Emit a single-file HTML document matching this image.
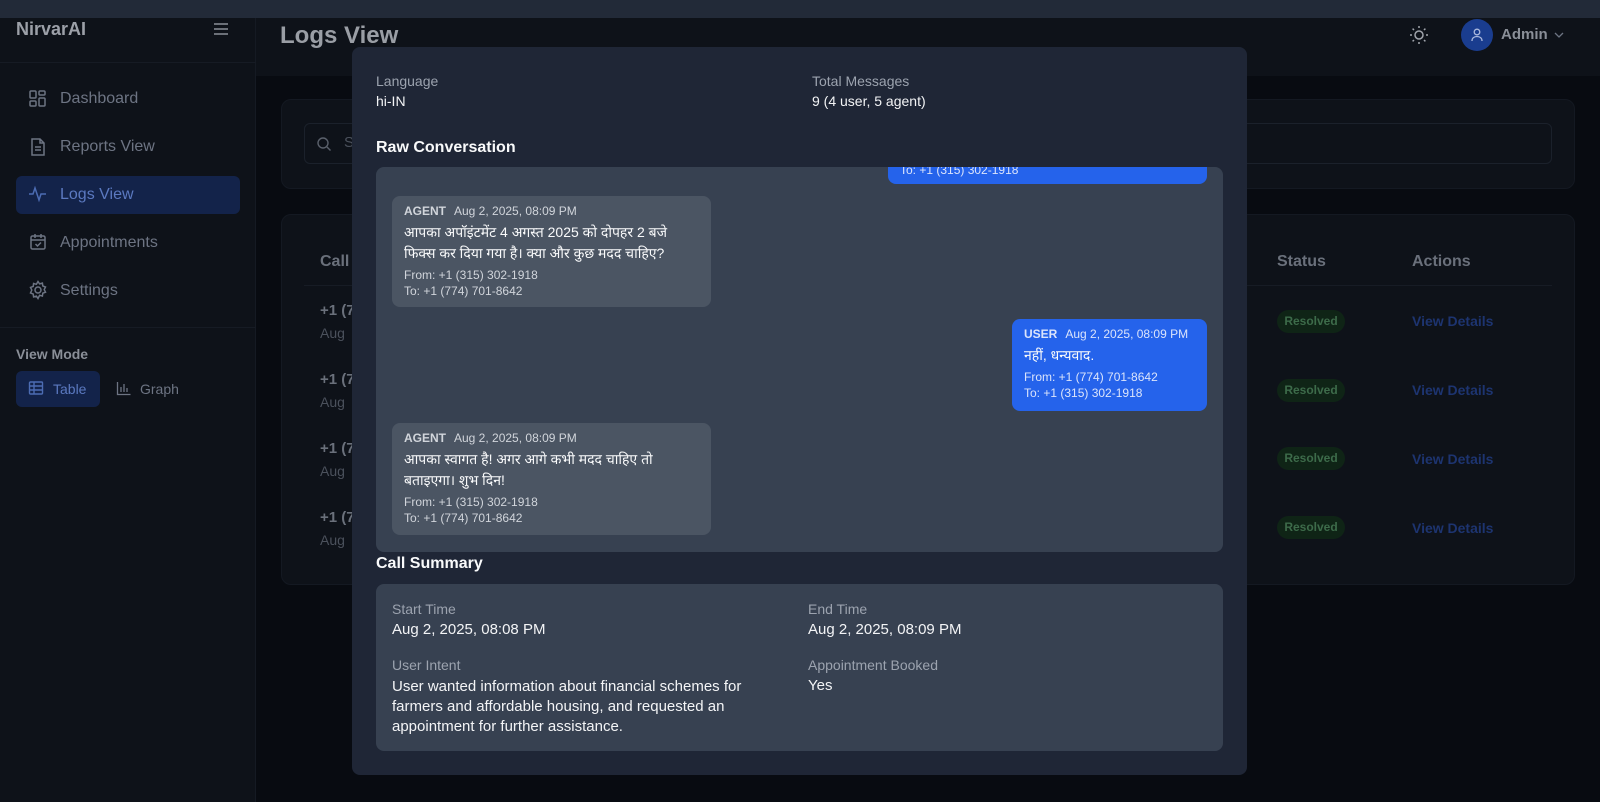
<!DOCTYPE html>
<html><head><meta charset="utf-8">
<style>
*{margin:0;padding:0;box-sizing:border-box}
body{width:1600px;height:802px;overflow:hidden;background:#080b11;font-family:"Liberation Sans","Noto Sans CJK SC","DejaVu Sans",sans-serif;position:relative}
.a{position:absolute}
.top{left:0;top:0;width:1600px;height:18px;background:#222a38}
.side{left:0;top:18px;width:256px;height:784px;background:#0e1219;border-right:1px solid #151a23}
.hdr{left:256px;top:18px;width:1344px;height:58px;background:#0e1219}
.nav{left:60px;font-size:16px;color:#6d7483}
.ic{left:28px;width:20px;height:20px}
.card{background:#0e1219;border:1px solid #141922;border-radius:10px}
.row1{font-size:15px;font-weight:bold;color:#6a707b}
.row2{font-size:14px;color:#4b515c}
.badge{left:1277px;width:68px;height:23px;border-radius:12px;background:#0f2416;color:#3d6b4a;font-size:12px;font-weight:bold;text-align:center;line-height:23px}
.vd{left:1412px;font-size:14px;font-weight:bold;color:#1d3470}
.modal{left:352px;top:47px;width:895px;height:728px;background:#1f2636;border-radius:8px}
.lbl{font-size:14px;color:#9ca3af}
.val{font-size:14px;color:#f3f4f6}
.h{font-size:16px;font-weight:bold;color:#f9fafb}
.box{background:#374151;border-radius:8px}
.bub{border-radius:8px;padding:8px 12px}
.ag{background:#4b5563;width:319px}
.us{background:#2563eb}
.bh{font-size:12px;color:#d1d5db}
.bh b{margin-right:8px}
.bt{font-size:14px;color:#f9fafb;line-height:21px;margin-top:4px}
.bf{font-size:12px;color:#d1d5db;line-height:16px;margin-top:3px}
.us .bh,.us .bf{color:#dbe4fb}
</style></head><body>
<div class="a top"></div>
<div class="a side">
  <div class="a" style="left:16px;top:1px;font-size:18px;font-weight:bold;color:#9ca0a8">NirvarAI</div>
  <svg class="a" style="left:212px;top:2px" width="18" height="18" viewBox="0 0 18 18" stroke="#8a8f98" stroke-width="1.6"><path d="M2 4h14M2 9h14M2 14h14"/></svg>
  <div class="a" style="left:0;top:44px;width:256px;height:1px;background:#161b24"></div>
  <svg class="a ic" style="top:71px" viewBox="0 0 20 20" fill="none" stroke="#6d7483" stroke-width="1.5"><rect x="2" y="2" width="6" height="7" rx="1"/><rect x="11" y="2" width="6" height="4" rx="1"/><rect x="11" y="9" width="6" height="8" rx="1"/><rect x="2" y="12" width="6" height="5" rx="1"/></svg>
  <div class="a nav" style="top:72px">Dashboard</div>
  <svg class="a ic" style="top:119px" viewBox="0 0 20 20" fill="none" stroke="#6d7483" stroke-width="1.5"><path d="M4 2h8l4 4v12H4z M12 2v4h4 M7 10h6 M7 13h6"/></svg>
  <div class="a nav" style="top:120px">Reports View</div>
  <div class="a" style="left:16px;top:158px;width:224px;height:38px;border-radius:6px;background:#13234a"></div>
  <svg class="a ic" style="top:166px" viewBox="0 0 20 20" fill="none" stroke="#4c6cb3" stroke-width="1.5"><path d="M1 10h4l2-6 4 12 2-6h5"/></svg>
  <div class="a nav" style="top:168px;color:#5b79c0">Logs View</div>
  <svg class="a ic" style="top:214px" viewBox="0 0 20 20" fill="none" stroke="#6d7483" stroke-width="1.5"><rect x="3" y="4" width="14" height="13" rx="1.5"/><path d="M3 8h14M7 2v4M13 2v4M7.5 12l2 2 3.5-3.5"/></svg>
  <div class="a nav" style="top:216px">Appointments</div>
  <svg class="a ic" style="top:262px" viewBox="0 0 20 20" fill="none" stroke="#6d7483" stroke-width="1.5"><circle cx="10" cy="10" r="3"/><path d="M10 1.5l1.6 2.4 2.8-.8.4 2.9 2.7 1-1.3 2.6 1.3 2.6-2.7 1-.4 2.9-2.8-.8L10 18.5l-1.6-2.4-2.8.8-.4-2.9-2.7-1L3.8 10 2.5 7.4l2.7-1 .4-2.9 2.8.8z"/></svg>
  <div class="a nav" style="top:264px">Settings</div>
  <div class="a" style="left:0;top:309px;width:256px;height:1px;background:#161b24"></div>
  <div class="a" style="left:16px;top:328px;font-size:14px;font-weight:bold;color:#8a8f98">View Mode</div>
  <div class="a" style="left:16px;top:353px;width:84px;height:36px;border-radius:6px;background:#13234a"></div>
  <svg class="a" style="left:28px;top:362px" width="16" height="16" viewBox="0 0 16 16" fill="none" stroke="#4c6cb3" stroke-width="1.4"><rect x="1.5" y="2" width="13" height="12" rx="1"/><path d="M1.5 6h13M1.5 10h13M6 2v12"/></svg>
  <div class="a" style="left:53px;top:363px;font-size:14px;color:#5b79c0">Table</div>
  <svg class="a" style="left:116px;top:362px" width="16" height="16" viewBox="0 0 16 16" fill="none" stroke="#6d7483" stroke-width="1.3"><path d="M1.5 2v12.5h13M5 12V7M8 12V4M11 12V8"/></svg>
  <div class="a" style="left:140px;top:363px;font-size:14px;color:#6d7483">Graph</div>
</div>
<div class="a hdr">
  <div class="a" style="left:24px;top:4px;font-size:24px;font-weight:bold;color:#9a9ea5">Logs View</div>
  <svg class="a" style="left:1152px;top:6px" width="22" height="22" viewBox="0 0 22 22" fill="none" stroke="#a0a4ab" stroke-width="1.5"><circle cx="11" cy="11" r="4"/><path d="M11 2v2M11 18v2M2 11h2M18 11h2M4.6 4.6l1.4 1.4M16 16l1.4 1.4M4.6 17.4L6 16M16 6l1.4-1.4"/></svg>
  <div class="a" style="left:1205px;top:1px;width:32px;height:32px;border-radius:50%;background:#1a3d8f"></div>
  <svg class="a" style="left:1213px;top:9px" width="16" height="16" viewBox="0 0 16 16" fill="none" stroke="#aab8dd" stroke-width="1.3"><circle cx="8" cy="5" r="2.8"/><path d="M3 14c0-3 2.2-4.5 5-4.5s5 1.5 5 4.5"/></svg>
  <div class="a" style="left:1245px;top:8px;font-size:15px;font-weight:bold;color:#8a8f98">Admin</div>
  <svg class="a" style="left:1297px;top:12px" width="12" height="10" viewBox="0 0 12 10" fill="none" stroke="#6d7483" stroke-width="1.3"><path d="M2 3l4 4 4-4"/></svg>
</div>
<div class="a card" style="left:281px;top:99px;width:1294px;height:90px"></div>
<div class="a" style="left:304px;top:123px;width:1248px;height:41px;border:1px solid #1b212b;border-radius:6px"></div>
<svg class="a" style="left:316px;top:136px" width="16" height="16" viewBox="0 0 16 16" fill="none" stroke="#5a606b" stroke-width="1.4"><circle cx="7" cy="7" r="5"/><path d="M11 11l3.5 3.5"/></svg>
<div class="a" style="left:344px;top:134px;font-size:15px;color:#4b515c">S</div>
<div class="a card" style="left:281px;top:214px;width:1294px;height:371px"></div>
<div class="a" style="left:304px;top:285px;width:1248px;height:1px;background:#171c25"></div>
<div class="a" style="left:320px;top:253px;font-size:16px;font-weight:bold;color:#6a707b">Call</div>
<div class="a" style="left:1277px;top:253px;font-size:16px;font-weight:bold;color:#6a707b">Status</div>
<div class="a" style="left:1412px;top:253px;font-size:16px;font-weight:bold;color:#6a707b">Actions</div>
<div class="a row1" style="left:320px;top:302px">+1 (7</div><div class="a row2" style="left:320px;top:325px">Aug</div>
<div class="a row1" style="left:320px;top:371px">+1 (7</div><div class="a row2" style="left:320px;top:394px">Aug</div>
<div class="a row1" style="left:320px;top:440px">+1 (7</div><div class="a row2" style="left:320px;top:463px">Aug</div>
<div class="a row1" style="left:320px;top:509px">+1 (7</div><div class="a row2" style="left:320px;top:532px">Aug</div>
<div class="a badge" style="top:310px">Resolved</div><div class="a vd" style="top:313px">View Details</div>
<div class="a badge" style="top:379px">Resolved</div><div class="a vd" style="top:382px">View Details</div>
<div class="a badge" style="top:447px">Resolved</div><div class="a vd" style="top:451px">View Details</div>
<div class="a badge" style="top:516px">Resolved</div><div class="a vd" style="top:520px">View Details</div>

<div class="a modal">
  <div class="a lbl" style="left:24px;top:26px">Language</div>
  <div class="a val" style="left:24px;top:46px">hi-IN</div>
  <div class="a lbl" style="left:460px;top:26px">Total Messages</div>
  <div class="a val" style="left:460px;top:46px">9 (4 user, 5 agent)</div>
  <div class="a h" style="left:24px;top:92px">Raw Conversation</div>
  <div class="a box" style="left:24px;top:120px;width:847px;height:385px;overflow:hidden">
    <div class="a bub us" style="left:512px;top:-40px;width:319px;height:57px">
      <div class="bf" style="position:absolute;bottom:6px;left:12px">To: +1 (315) 302-1918</div>
    </div>
    <div class="a bub ag" style="left:16px;top:29px;height:111px">
      <div class="bh"><b>AGENT</b>Aug 2, 2025, 08:09 PM</div>
      <div class="bt">आपका अपॉइंटमेंट 4 अगस्त 2025 को दोपहर 2 बजे फिक्स कर दिया गया है। क्या और कुछ मदद चाहिए?</div>
      <div class="bf">From: +1 (315) 302-1918<br>To: +1 (774) 701-8642</div>
    </div>
    <div class="a bub us" style="left:636px;top:152px;width:195px;height:92px">
      <div class="bh"><b>USER</b>Aug 2, 2025, 08:09 PM</div>
      <div class="bt">नहीं, धन्यवाद.</div>
      <div class="bf">From: +1 (774) 701-8642<br>To: +1 (315) 302-1918</div>
    </div>
    <div class="a bub ag" style="left:16px;top:256px;height:112px">
      <div class="bh"><b>AGENT</b>Aug 2, 2025, 08:09 PM</div>
      <div class="bt">आपका स्वागत है! अगर आगे कभी मदद चाहिए तो बताइएगा। शुभ दिन!</div>
      <div class="bf">From: +1 (315) 302-1918<br>To: +1 (774) 701-8642</div>
    </div>
  </div>
  <div class="a h" style="left:24px;top:508px">Call Summary</div>
  <div class="a box" style="left:24px;top:537px;width:847px;height:167px">
    <div class="a lbl" style="left:16px;top:17px">Start Time</div>
    <div class="a val" style="left:16px;top:37px;font-size:15px">Aug 2, 2025, 08:08 PM</div>
    <div class="a lbl" style="left:432px;top:17px">End Time</div>
    <div class="a val" style="left:432px;top:37px;font-size:15px">Aug 2, 2025, 08:09 PM</div>
    <div class="a lbl" style="left:16px;top:73px">User Intent</div>
    <div class="a val" style="left:16px;top:93px;width:370px;font-size:15px;line-height:20px">User wanted information about financial schemes for farmers and affordable housing, and requested an appointment for further assistance.</div>
    <div class="a lbl" style="left:432px;top:73px">Appointment Booked</div>
    <div class="a val" style="left:432px;top:93px;font-size:15px">Yes</div>
  </div>
</div>
</body></html>
